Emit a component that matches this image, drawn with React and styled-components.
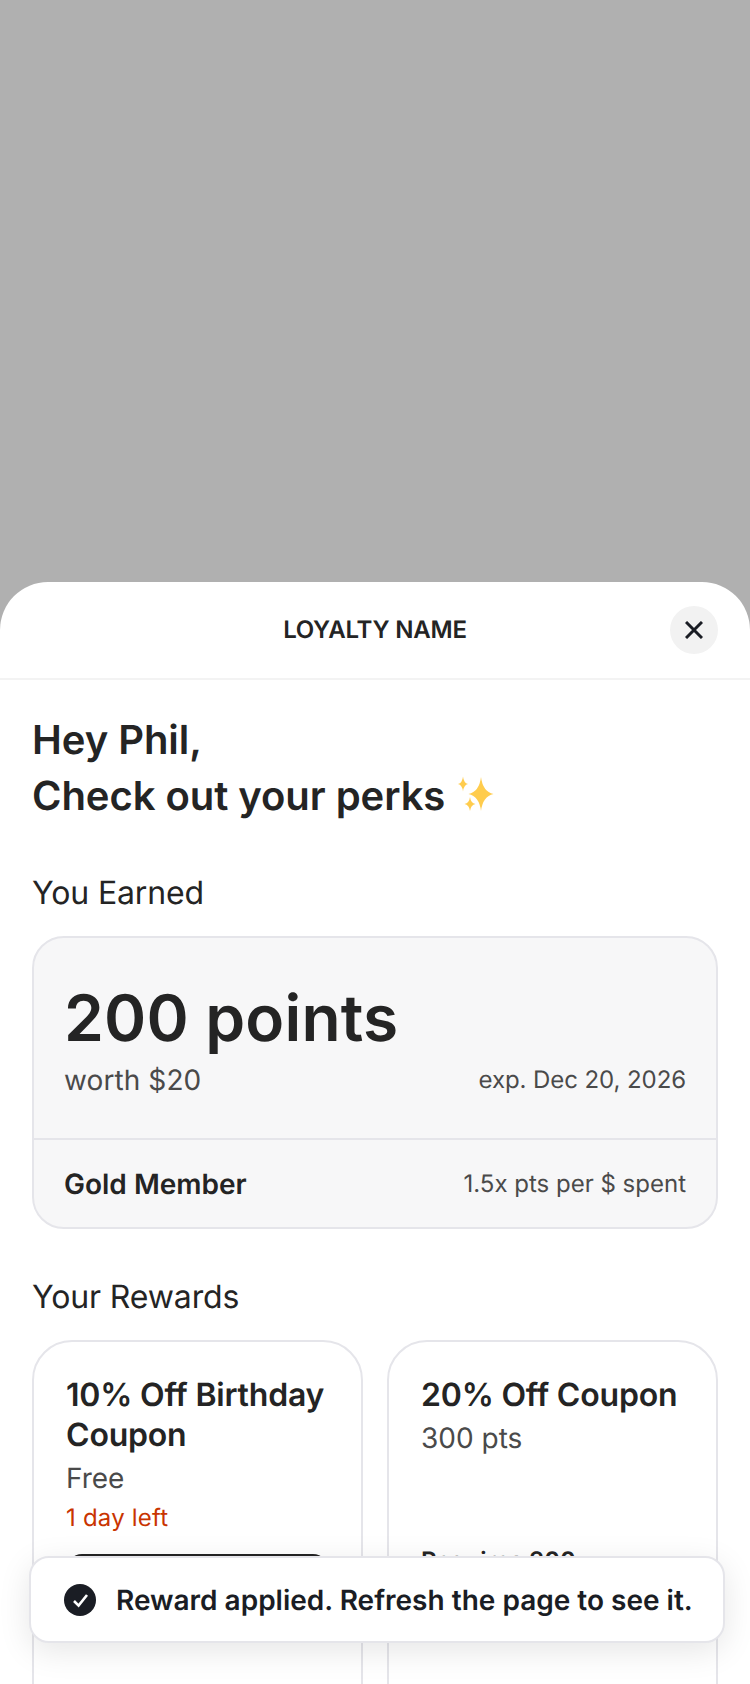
import React from 'react';
import styled, { createGlobalStyle } from 'styled-components';

const GlobalStyle = createGlobalStyle`
  html, body {
    margin: 0;
    padding: 0;
    background: #fff;
  }

  body {
    font-family: Inter, "Noto Sans", sans-serif;
    color: #242424;
    text-rendering: geometricPrecision;
  }

  * {
    box-sizing: border-box;
  }
`;

const Page = styled.div`
  position: relative;
  display: flex;
  flex-direction: column;
  width: 750px;
  height: 1684px;
  overflow: hidden;
  background: #b0b0b0;
`;

const Backdrop = styled.div`
  flex: 0 0 582px;
`;

const Sheet = styled.div`
  flex: 1;
  min-height: 0;
  overflow: hidden;
  background: #fff;
  border-radius: 48px 48px 0 0;
`;

const SheetHeader = styled.header`
  position: relative;
  display: flex;
  align-items: center;
  justify-content: center;
  height: 98px;
  border-bottom: 2px solid #f3f3f3;
`;

const SheetTitle = styled.h1`
  margin: 0;
  font-size: 24px;
  font-weight: 600;
  line-height: 32px;
  letter-spacing: -0.2px;
  text-transform: uppercase;
`;

const CloseButton = styled.button`
  position: absolute;
  top: 24px;
  right: 32px;
  display: flex;
  align-items: center;
  justify-content: center;
  width: 48px;
  height: 48px;
  padding: 0;
  border: 0;
  border-radius: 50%;
  background: #f2f2f2;
`;

const Content = styled.div`
  padding: 32px 32px 0;
`;

const Greeting = styled.h2`
  margin: 0 0 47px;
  font-size: 40px;
  font-weight: 600;
  line-height: 56px;
  letter-spacing: -0.05px;
`;

const Sparkles = styled.svg`
  width: 40px;
  height: 40px;
  margin-left: 2px;
  vertical-align: -4px;
`;

const SectionTitle = styled.h3`
  margin: 0 0 21px;
  font-size: 32px;
  font-weight: 400;
  line-height: 44px;
  letter-spacing: -0.12px;
`;

const PointsCard = styled.section`
  margin-bottom: 46px;
  border: 2px solid #e5e5ea;
  border-radius: 32px;
  background: #f7f7f8;
  overflow: hidden;
`;

const PointsTop = styled.div`
  padding: 40px 30px 38px;
  border-bottom: 2px solid #e5e5ea;
`;

const Points = styled.div`
  font-size: 64px;
  font-weight: 600;
  line-height: 82px;
  letter-spacing: 0.2px;
`;

const SplitRow = styled.div`
  display: flex;
  align-items: center;
  justify-content: space-between;
`;

const Worth = styled.span`
  font-size: 28px;
  line-height: 40px;
  letter-spacing: 0.1px;
  color: #4a4a4a;
`;

const Fine = styled.span`
  font-size: 24px;
  line-height: 36px;
  letter-spacing: ${(props) => props.$spacing || 0};
  color: #4a4a4a;
`;

const PointsBottom = styled(SplitRow)`
  height: 87px;
  padding: 0 30px;
`;

const Tier = styled.span`
  font-size: 28px;
  font-weight: 600;
  line-height: 40px;
`;

const RewardGrid = styled.div`
  display: grid;
  grid-template-columns: 1fr 1fr;
  gap: 24px;
`;

const RewardCard = styled.article`
  display: flex;
  flex-direction: column;
  height: 400px;
  padding: 33px 32px;
  border: 2px solid #e5e5ea;
  border-radius: 40px;
`;

const RewardName = styled.div`
  font-size: 32px;
  font-weight: 600;
  line-height: 40px;
  letter-spacing: -0.2px;
`;

const RewardCost = styled.div`
  margin-top: 3px;
  font-size: 28px;
  line-height: 40px;
  color: #4a4a4a;
`;

const RewardExpiry = styled.div`
  margin-top: 2px;
  font-size: 24px;
  line-height: 36px;
  letter-spacing: 0.2px;
  color: #c93400;
`;

const RedeemButton = styled.button`
  flex: 0 0 72px;
  margin-top: 18px;
  border: 0;
  border-radius: 16px;
  background: #242424;
  color: #fff;
  font: 600 28px Inter, sans-serif;
`;

const Requirement = styled.div`
  margin-top: 87px;
  font-size: 24px;
  font-weight: 600;
  line-height: 32px;
`;

const Toast = styled.div`
  position: absolute;
  left: 29px;
  bottom: 41px;
  display: flex;
  align-items: center;
  gap: 20px;
  width: 696px;
  height: 87px;
  padding-left: 33px;
  border: 2px solid #e5e5ea;
  border-radius: 20px;
  background: #fff;
  box-shadow: 0 8px 32px rgba(0, 0, 0, 0.1);
  color: #1a1d24;
  font-size: 28px;
  font-weight: 600;
  line-height: 40px;
  white-space: nowrap;
`;

const ToastIcon = styled.svg`
  flex: none;
  width: 32px;
  height: 32px;
`;

const star = (cx, cy, rx, ry) => {
  const kx = rx * 0.14;
  const ky = ry * 0.14;
  return `M${cx} ${cy - ry}Q${cx + kx} ${cy - ky} ${cx + rx} ${cy}Q${cx + kx} ${cy + ky} ${cx} ${cy + ry}Q${cx - kx} ${cy + ky} ${cx - rx} ${cy}Q${cx - kx} ${cy - ky} ${cx} ${cy - ry}Z`;
};

const App = () => (
  <Page>
    <GlobalStyle />
    <Backdrop />
    <Sheet>
      <SheetHeader>
        <SheetTitle>Loyalty Name</SheetTitle>
        <CloseButton aria-label="Close">
          <svg width="18" height="18" viewBox="0 0 18 18" fill="none" stroke="#1a1d24" strokeWidth="3">
            <path d="M1 1L17 17M17 1L1 17" />
          </svg>
        </CloseButton>
      </SheetHeader>
      <Content>
        <Greeting>
          Hey Phil,
          <br />
          Check out your perks{' '}
          <Sparkles viewBox="0 0 40 40" fill="#ffcc4d">
            <path d={star(24, 20, 12.5, 17)} />
            <path d={star(6, 10, 5, 7.5)} />
            <path d={star(13, 30, 5.5, 7)} />
          </Sparkles>
        </Greeting>

        <SectionTitle>You Earned</SectionTitle>
        <PointsCard>
          <PointsTop>
            <Points>200 points</Points>
            <SplitRow>
              <Worth>worth $20</Worth>
              <Fine $spacing="-0.08px">exp. Dec 20, 2026</Fine>
            </SplitRow>
          </PointsTop>
          <PointsBottom>
            <Tier>Gold Member</Tier>
            <Fine>1.5x pts per $ spent</Fine>
          </PointsBottom>
        </PointsCard>

        <SectionTitle>Your Rewards</SectionTitle>
        <RewardGrid>
          <RewardCard>
            <RewardName>10% Off Birthday Coupon</RewardName>
            <RewardCost>Free</RewardCost>
            <RewardExpiry>1 day left</RewardExpiry>
            <RedeemButton>Redeem</RedeemButton>
          </RewardCard>
          <RewardCard>
            <RewardName>20% Off Coupon</RewardName>
            <RewardCost>300 pts</RewardCost>
            <Requirement>Requires 300</Requirement>
          </RewardCard>
        </RewardGrid>
      </Content>
    </Sheet>
    <Toast>
      <ToastIcon viewBox="0 0 32 32">
        <circle cx="16" cy="16" r="16" fill="#1a1d24" />
        <path d="M10 17L14.6 21.6L23 11" fill="none" stroke="#fff" strokeWidth="2.6" />
      </ToastIcon>
      Reward applied. Refresh the page to see it.
    </Toast>
  </Page>
);

export default App;
